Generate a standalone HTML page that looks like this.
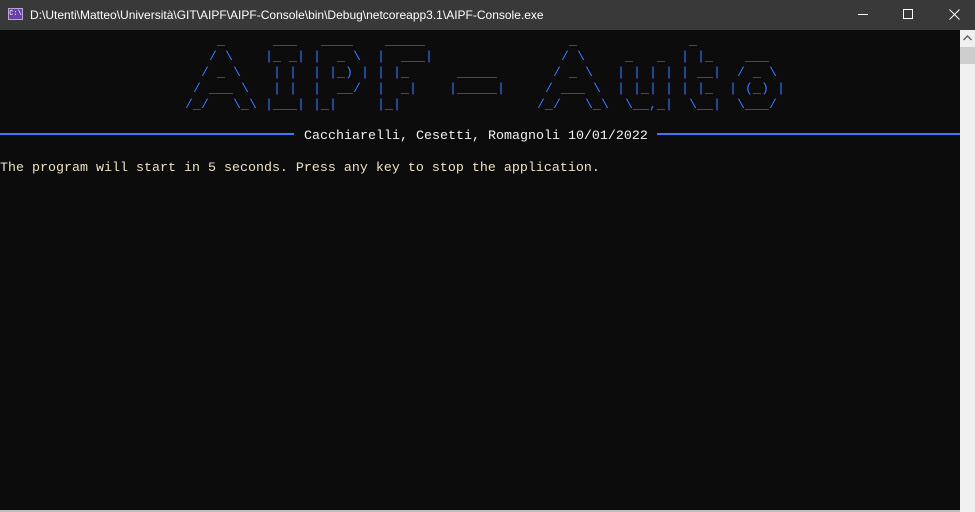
<!DOCTYPE html>
<html><head><meta charset="utf-8"><style>
*{margin:0;padding:0}
body{width:975px;height:512px;background:#0c0c0c;position:relative;overflow:hidden;font-family:"Liberation Sans",sans-serif}
#tb{position:absolute;left:0;top:0;width:975px;height:30px;background:#393939;color:#fff;font-size:12px}
#tb .t{position:absolute;left:30px;top:8px;white-space:nowrap}
#ic{position:absolute;left:8px;top:8px;width:15px;height:12px;background:#6b3fa8;border:1px solid #b9a3dd;box-sizing:border-box;font:7px "Liberation Mono",monospace;color:#fff;line-height:10px;text-align:center}
pre{position:absolute;font:13.33px/16px "Liberation Mono",monospace;color:#3b78ff;top:34px}
.l{position:absolute;height:2px;top:133px;background:#3b78ff}
.tx{position:absolute;font:13.33px/16px "Liberation Mono",monospace;white-space:pre}
#sb{position:absolute;left:960px;top:30px;width:15px;height:482px;background:#f0f0f0}
#th{position:absolute;left:960px;top:47px;width:15px;height:17px;background:#cdcdcd}
</style></head><body>
<div id="tb"><div id="ic">C:\</div><div class="t">D:\Utenti\Matteo\Università\GIT\AIPF\AIPF-Console\bin\Debug\netcoreapp3.1\AIPF-Console.exe</div>
<div style="position:absolute;left:858px;top:14px;width:10px;height:1px;background:#fff"></div>
<div style="position:absolute;left:903px;top:9px;width:10px;height:10px;border:1px solid #fff;box-sizing:border-box"></div>
<svg style="position:absolute;left:949px;top:9px" width="11" height="11"><path d="M0.5 0.5L10.5 10.5M10.5 0.5L0.5 10.5" stroke="#fff" stroke-width="1"/></svg>
</div>
<pre style="left:185px">    _    
   / \   
  / _ \  
 / ___ \ 
/_/   \_\</pre>
<pre style="left:265px"> ___ 
|_ _|
 | | 
 | | 
|___|</pre>
<pre style="left:313px"> ____  
|  _ \ 
| |_) |
|  __/ 
|_|    </pre>
<pre style="left:377px"> _____ 
|  ___|
| |_   
|  _|  
|_|    </pre>
<pre style="left:449px">        
        
 _____  
|_____| 
        </pre>
<pre style="left:537px">    _    
   / \   
  / _ \  
 / ___ \ 
/_/   \_\</pre>
<pre style="left:617px">       
 _   _ 
| | | |
| |_| |
 \__,_|</pre>
<pre style="left:681px"> _   
| |_ 
| __|
| |_ 
 \__|</pre>
<pre style="left:729px">       
  ___  
 / _ \ 
| (_) |
 \___/ </pre>
<div class="l" style="left:0;width:294px"></div>
<div class="l" style="left:657px;width:303px"></div>
<div class="tx" style="left:304px;top:129px;color:#f2f2f2">Cacchiarelli, Cesetti, Romagnoli 10/01/2022</div>
<div class="tx" style="left:0;top:161px;color:#eae2c6">The program will start in 5 seconds. Press any key to stop the application.</div>
<div id="sb"></div><div id="th"></div>
<svg style="position:absolute;left:963px;top:35px" width="9" height="6"><path d="M0.5 5L4.5 1L8.5 5" stroke="#606060" stroke-width="1.5" fill="none"/></svg>
<div style="position:absolute;left:0;top:510px;width:960px;height:2px;background:#bdbdbd"></div>
</body></html>
